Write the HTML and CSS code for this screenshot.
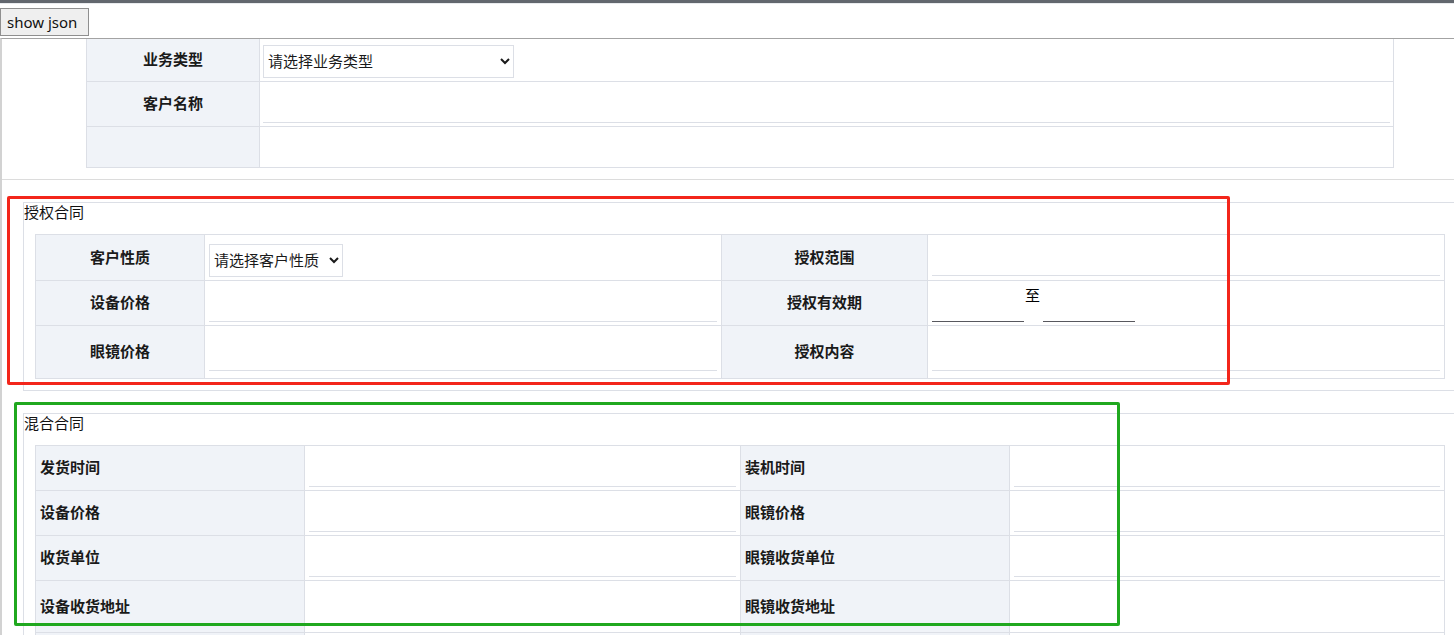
FILE: index.html
```html
<!DOCTYPE html>
<html lang="zh-CN">
<head>
<meta charset="utf-8">
<title>合同表单</title>
<link rel="stylesheet" href="styles.css">
</head>
<body>
<div class="topbar"></div>
<div class="toolbar"><button class="btn" type="button">show json</button></div>
<div class="page">
  <div class="sec1">
    <div class="grid g1">
      <div class="lab">业务类型</div>
      <div class="val val-sel1"><select class="sel sel-wide"><option>请选择业务类型</option></select></div>
      <div class="lab">客户名称</div>
      <div class="val"><input class="line" type="text"></div>
      <div class="lab"></div>
      <div class="val"></div>
    </div>
  </div>

  <div class="box">
    <div class="box-title">授权合同</div>
    <div class="grid g2">
      <div class="lab">客户性质</div>
      <div class="val val-sel2"><select class="sel sel-narrow"><option>请选择客户性质</option></select></div>
      <div class="lab">授权范围</div>
      <div class="val pb4"><input class="line" type="text"></div>

      <div class="lab">设备价格</div>
      <div class="val"><input class="line" type="text"></div>
      <div class="lab">授权有效期</div>
      <div class="val val-date">
        <input class="date" type="text">
        <span class="to">至</span>
        <input class="date" type="text">
      </div>

      <div class="lab">眼镜价格</div>
      <div class="val pb7"><input class="line" type="text"></div>
      <div class="lab">授权内容</div>
      <div class="val pb7"><input class="line" type="text"></div>
    </div>
  </div>

  <div class="box">
    <div class="box-title">混合合同</div>
    <div class="grid g3">
      <div class="lab left">发货时间</div>
      <div class="val"><input class="line" type="text"></div>
      <div class="lab left">装机时间</div>
      <div class="val"><input class="line" type="text"></div>

      <div class="lab left">设备价格</div>
      <div class="val"><input class="line" type="text"></div>
      <div class="lab left">眼镜价格</div>
      <div class="val"><input class="line" type="text"></div>

      <div class="lab left">收货单位</div>
      <div class="val"><input class="line" type="text"></div>
      <div class="lab left">眼镜收货单位</div>
      <div class="val"><input class="line" type="text"></div>

      <div class="lab left">设备收货地址</div>
      <div class="val"></div>
      <div class="lab left">眼镜收货地址</div>
      <div class="val"></div>

      <div class="lab left"></div>
      <div class="val"></div>
      <div class="lab left"></div>
      <div class="val"></div>
    </div>
  </div>
</div>

<div class="mark mark-red"></div>
<div class="mark mark-green"></div>
</body>
</html>
```

FILE: styles.css
```css
html, body {
  margin: 0;
  padding: 0;
  overflow: hidden;
  background: #fff;
}

body {
  font-family: "Noto Sans", "Noto Sans CJK SC", sans-serif;
  font-size: 15px;
  color: #1f1f1f;
  position: relative;
}

.topbar {
  height: 3px;
  background: #62676e;
  border-bottom: 1px solid #e9ebee;
}

.toolbar {
  height: 34px;
  box-sizing: border-box;
  padding-top: 4px;
}

.btn {
  display: block;
  width: 89px;
  height: 28px;
  margin: 0;
  padding: 0 6px;
  box-sizing: border-box;
  background: #efefef;
  border: 1px solid #8f8f8f;
  border-radius: 0;
  font-family: "Noto Sans", "Noto Sans CJK SC", sans-serif;
  font-size: 15px;
  color: #111;
  text-align: left;
  line-height: 24px;
}

.page {
  border-top: 1px solid #a3a3a3;
  border-left: 2px solid #d2d2d2;
}

.sec1 {
  padding-bottom: 11px;
  border-bottom: 1px solid #dcdcdc;
}

.grid {
  display: grid;
  border-left: 1px solid #dcdfe6;
}

.g1 {
  margin: 0 60px 0 84px;
  grid-template-columns: 173px 1fr;
  grid-template-rows: 43px 45px 41px;
}

.g2 {
  margin-top: 9px;
  border-top: 1px solid #dcdfe6;
  grid-template-columns: 169px 517px 206px 1fr;
  grid-template-rows: 46px 45px 53px;
}

.g3 {
  margin-top: 9px;
  border-top: 1px solid #dcdfe6;
  grid-template-columns: 269px 436px 269px 1fr;
  grid-template-rows: 45px 45px 45px 52px 45px;
}

.lab,
.val {
  box-sizing: border-box;
  border-right: 1px solid #dcdfe6;
  border-bottom: 1px solid #dcdfe6;
  min-width: 0;
}

.lab {
  background: #f0f3f8;
  display: flex;
  align-items: center;
  justify-content: center;
  padding-bottom: 3px;
  font-weight: bold;
  color: #1a1a1a;
}

.lab.left {
  justify-content: flex-start;
  padding-left: 4px;
}

.val {
  display: flex;
  align-items: flex-end;
  padding: 0 4px 3px 4px;
}

.g1 .val {
  padding-left: 3px;
  padding-right: 3px;
}

.val.pb4 { padding-bottom: 4px; }
.val.pb7 { padding-bottom: 7px; }

.line {
  display: block;
  width: 100%;
  height: 30px;
  margin: 0;
  padding: 0;
  border: 0;
  border-bottom: 1px solid #dcdfe6;
  outline: none;
  background: transparent;
  box-sizing: border-box;
}

.val-sel1 {
  align-items: flex-start;
  padding-top: 6px;
}

.val-sel2 {
  align-items: flex-start;
  padding-top: 9px;
}

.sel {
  height: 33px;
  margin: 0;
  padding: 0 0 2px 0;
  border: 1px solid #dcdfe6;
  border-radius: 0;
  background: #fff;
  font-family: "Noto Sans", "Noto Sans CJK SC", sans-serif;
  font-size: 15px;
  color: #1a1a1a;
  box-sizing: border-box;
}

.sel-wide {
  width: 251px;
}

.sel-narrow {
  width: 134px;
}

.val-date {
  align-items: flex-start;
  padding-top: 5px;
}

.date {
  display: block;
  width: 92px;
  height: 36px;
  margin: 0;
  padding: 0;
  border: 0;
  border-bottom: 1px solid #58585e;
  outline: none;
  background: transparent;
  box-sizing: border-box;
  flex: none;
}

.to {
  display: block;
  line-height: 18px;
  margin: 0 3px 0 1px;
  font-size: 15px;
  color: #000;
}

.box {
  margin: 22px 0 0 21px;
  border-top: 1px solid #dcdfe6;
  border-left: 1px solid #dcdfe6;
  border-bottom: 1px solid #dcdfe6;
  padding: 0 9px 11px 11px;
}

.box-title {
  height: 22px;
  line-height: 19px;
  margin-left: -11px;
  color: #111;
}

.mark {
  position: absolute;
  box-sizing: border-box;
  border-radius: 2px;
  pointer-events: none;
}

.mark-red {
  left: 7px;
  top: 196px;
  width: 1223px;
  height: 189px;
  border: 3px solid #f3261b;
}

.mark-green {
  left: 14px;
  top: 402px;
  width: 1106px;
  height: 224px;
  border: 3px solid #20a81f;
}
```
